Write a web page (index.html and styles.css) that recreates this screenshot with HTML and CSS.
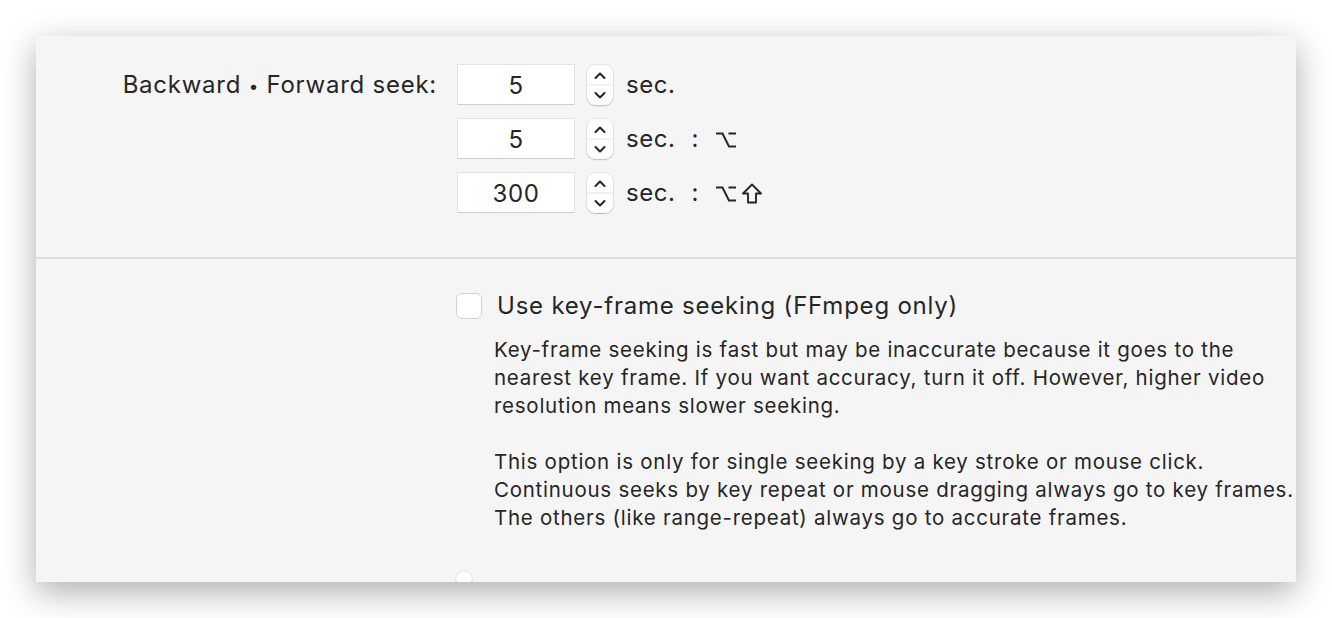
FILE: index.html
```html
<!DOCTYPE html>
<html>
<head>
<meta charset="utf-8">
<link rel="stylesheet" href="styles.css">
</head>
<body>
<div class="panel">
  <section class="seek">
    <div class="label">Backward <span class="bullet">•</span> Forward seek:</div>
    <div class="row">
      <div class="field">5</div>
      <div class="stepper"><svg width="26" height="40" viewBox="0 0 26 40"><path d="M8.5 13 L13 8.5 L17.5 13 M8.5 28 L13 32.5 L17.5 28" fill="none" stroke="#222" stroke-width="2" stroke-linecap="round" stroke-linejoin="round"/><line x1="0" y1="20" x2="26" y2="20" stroke="#e3e3e3" stroke-width="1"/></svg></div>
      <span class="unit">sec.</span>
    </div>
    <div class="row">
      <div class="field">5</div>
      <div class="stepper"><svg width="26" height="40" viewBox="0 0 26 40"><path d="M8.5 13 L13 8.5 L17.5 13 M8.5 28 L13 32.5 L17.5 28" fill="none" stroke="#222" stroke-width="2" stroke-linecap="round" stroke-linejoin="round"/><line x1="0" y1="20" x2="26" y2="20" stroke="#e3e3e3" stroke-width="1"/></svg></div>
      <span class="unit">sec.</span><span class="colon">:</span>
      <svg class="key" width="22" height="18" viewBox="0 0 22 18"><path d="M1 2.5 H7.5 L14 15.5 H21 M13.5 2.5 H21" fill="none" stroke="#262626" stroke-width="2"/></svg>
    </div>
    <div class="row">
      <div class="field">300</div>
      <div class="stepper"><svg width="26" height="40" viewBox="0 0 26 40"><path d="M8.5 13 L13 8.5 L17.5 13 M8.5 28 L13 32.5 L17.5 28" fill="none" stroke="#222" stroke-width="2" stroke-linecap="round" stroke-linejoin="round"/><line x1="0" y1="20" x2="26" y2="20" stroke="#e3e3e3" stroke-width="1"/></svg></div>
      <span class="unit">sec.</span><span class="colon">:</span>
      <svg class="key" width="22" height="18" viewBox="0 0 22 18"><path d="M1 2.5 H7.5 L14 15.5 H21 M13.5 2.5 H21" fill="none" stroke="#262626" stroke-width="2"/></svg>
      <svg class="shift" width="22" height="21" viewBox="0 0 22 21"><path d="M11 1.5 L20 10.5 H15 V19.5 H7 V10.5 H2 Z" fill="none" stroke="#262626" stroke-width="1.9" stroke-linejoin="round"/></svg>
    </div>
  </section>
  <div class="sep"></div>
  <section class="keyframe">
    <label class="check"><span class="box"></span><span class="check-text">Use key-frame seeking (FFmpeg only)</span></label>
    <div class="desc">
      <p>Key-frame seeking is fast but may be inaccurate because it goes to the<br>nearest key frame. If you want accuracy, turn it off. However, higher video<br>resolution means slower seeking.</p>
      <p>This option is only for single seeking by a key stroke or mouse click.<br>Continuous seeks by key repeat or mouse dragging always go to key frames.<br>The others (like range-repeat) always go to accurate frames.</p>
    </div>
    <span class="radio"></span>
  </section>
</div>
</body>
</html>
```

FILE: styles.css
```css
html, body {
  margin: 0;
  padding: 0;
  background: #ffffff;
}
body {
  padding: 36px;
  font-family: Inter, "Open Sans", sans-serif;
  color: #262626;
}
.panel {
  width: 1260px;
  height: 546px;
  background: #f5f5f5;
  box-shadow: 0 10px 32px rgba(0, 0, 0, 0.32);
  overflow: hidden;
}
.seek {
  display: grid;
  grid-template-columns: 401px auto;
  column-gap: 20px;
  row-gap: 13px;
  padding: 28px 0 44px 0;
}
.label {
  grid-row: 1 / span 3;
  text-align: right;
  font-size: 24px;
  letter-spacing: 0.75px;
  line-height: 42px;
}
.bullet {
  font-size: 17px;
  vertical-align: 1px;
}
.row {
  grid-column: 2;
  display: flex;
  align-items: center;
  height: 41px;
  font-size: 24px;
  letter-spacing: 0.55px;
}
.field {
  width: 116px;
  height: 39px;
  background: #fff;
  border: 1px solid #e4e4e4;
  border-bottom-color: #cfcfcf;
  text-align: center;
  line-height: 42px;
  box-sizing: content-box;
}
.stepper {
  width: 26px;
  height: 40px;
  margin-left: 12px;
  background: #fff;
  border-radius: 8px;
  box-shadow: 0 0 0 0.5px rgba(0,0,0,0.12), 0 1px 1.5px rgba(0,0,0,0.18);
  overflow: hidden;
}
.stepper svg {
  display: block;
}
.unit {
  margin-left: 13px;
}
.colon {
  margin-left: 16px;
}
.key {
  margin-left: 16px;
  margin-top: 2px;
}
.shift {
  margin-left: 4px;
  margin-top: 1px;
}
.sep {
  height: 2px;
  background: #dcdcdc;
}
.keyframe {
  position: relative;
  padding: 33px 0 0 420px;
  height: 288px;
}
.check {
  display: flex;
  align-items: center;
  font-size: 24px;
  letter-spacing: 0.78px;
}
.box {
  width: 24px;
  height: 24px;
  background: #fff;
  border: 1px solid #d2d2d2;
  border-radius: 6px;
  margin-right: 15px;
}
.check-text {
  line-height: 26px;
  margin-top: 1px;
}
.desc {
  margin-left: 38px;
  margin-top: 17px;
  font-size: 20.5px;
  letter-spacing: 0.74px;
  line-height: 28px;
  white-space: nowrap;
}
.desc p {
  margin: 0 0 28px 0;
}
.radio {
  position: absolute;
  left: 420px;
  top: 312px;
  width: 16px;
  height: 16px;
  border-radius: 50%;
  background: #fff;
  box-shadow: 0 0 0 0.5px rgba(0,0,0,0.15), 0 0.5px 1px rgba(0,0,0,0.2);
}
```
